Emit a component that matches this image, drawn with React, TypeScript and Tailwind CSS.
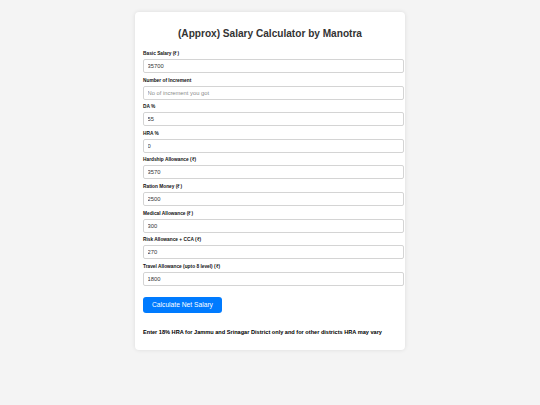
import { useState } from 'react';

type Field = {
  key: string;
  label: string;
  value: string;
  placeholder?: string;
};

const FIELDS: Field[] = [
  { key: 'basic', label: 'Basic Salary (₹)', value: '35700' },
  { key: 'increment', label: 'Number of Increment', value: '', placeholder: 'No of increment you got' },
  { key: 'da', label: 'DA %', value: '55' },
  { key: 'hra', label: 'HRA %', value: '0' },
  { key: 'hardship', label: 'Hardship Allowance (₹)', value: '3570' },
  { key: 'ration', label: 'Ration Money (₹)', value: '2500' },
  { key: 'medical', label: 'Medical Allowance (₹)', value: '300' },
  { key: 'risk', label: 'Risk Allowance + CCA (₹)', value: '270' },
  { key: 'travel', label: 'Travel Allowance (upto 8 level) (₹)', value: '1800' },
];

export default function App() {
  const [values, setValues] = useState<Record<string, string>>(
    Object.fromEntries(FIELDS.map(f => [f.key, f.value]))
  );

  return (
    <div
      className="min-h-[405px] bg-[#f4f4f4] pt-[12px]"
      style={{ fontFamily: '"Liberation Sans", Arial, sans-serif' }}
    >
      <div className="mx-auto w-[270px] h-[338px] bg-white rounded-[4px] shadow-[0_0_4px_rgba(0,0,0,0.1)] pl-[8px] pt-[16px]">
        <h2 className="text-center text-[10.1px] leading-[12px] font-bold text-[#333] pr-[8px] mb-[11px]">
          (Approx) Salary Calculator by Manotra
        </h2>

        {FIELDS.map(f => (
          <div key={f.key} className="mb-[4.6px]">
            <label className="block text-[4.8px] leading-[6px] font-bold text-[#111] mb-[2px]">{f.label}</label>
            <input
              type="number"
              value={values[f.key]}
              placeholder={f.placeholder}
              onChange={e => setValues(prev => ({ ...prev, [f.key]: e.target.value }))}
              className="block w-[261px] h-[14px] border border-[#d4d4d4] rounded-[2px] px-[3.5px] text-[5.8px] text-[#333] placeholder:text-[#8a8a8a] outline-none"
            />
          </div>
        ))}

        <button className="mt-[3px] h-[16px] px-[9px] bg-[#007bff] text-white text-[6.7px] rounded-[3px]">
          Calculate Net Salary
        </button>

        <p className="mt-[15px] text-[5.6px] leading-[7px] font-bold text-black">
          Enter 18% HRA for Jammu and Srinagar District only and for other districts HRA may vary
        </p>
      </div>
    </div>
  );
}
